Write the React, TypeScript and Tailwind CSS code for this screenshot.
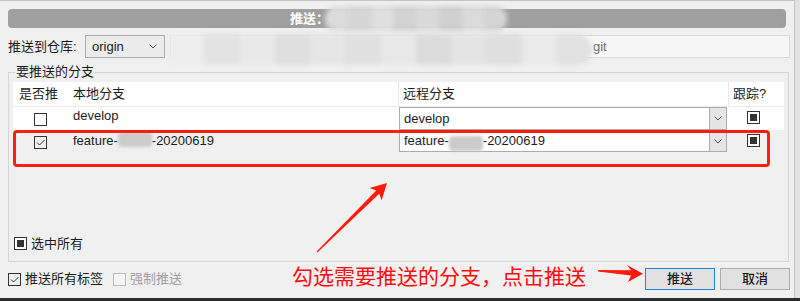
import React from 'react';

type BoxKind = 'empty' | 'check' | 'fill' | 'off';

// Windows-style checkbox
const Box: React.FC<{ kind: BoxKind }> = ({ kind }) => {
    if (kind === 'fill') {
        return (
            <span className="flex h-[13px] w-[13px] shrink-0 items-center justify-center border border-[#333333] bg-white">
                <span className="h-[7px] w-[7px] bg-[#333333]" />
            </span>
        );
    }
    if (kind === 'off') {
        return <span className="h-[13px] w-[13px] shrink-0 border border-[#bcbcbc] bg-[#f4f4f4]" />;
    }
    return (
        <span className="flex h-[13px] w-[13px] shrink-0 items-center justify-center border border-[#333333]">
            {kind === 'check' && (
                <svg width="11" height="11" viewBox="0 0 11 11">
                    <path d="M2 5.5 L4.5 8 L9.5 3" fill="none" stroke="#333333" strokeWidth="1" />
                </svg>
            )}
        </span>
    );
};

const Chevron = () => (
    <svg width="8" height="5" viewBox="0 0 8 5">
        <path d="M0.5 0.5 L4 4 L7.5 0.5" fill="none" stroke="#555555" strokeWidth="1" />
    </svg>
);

const Combo: React.FC<{ children: React.ReactNode }> = ({ children }) => (
    <div className="flex h-full w-full border border-[#acacac] bg-white">
        <div className="flex flex-1 items-center pl-[4px]">{children}</div>
        <div className="flex w-[17px] items-center justify-center border-l border-[#acacac] bg-[#e5e5e5]">
            <Chevron />
        </div>
    </div>
);

// the mosaic blur that hides a name
const Smudge = () => (
    <span className="inline-block h-[15px] w-[34px] translate-y-[2px] rounded-[4px] bg-[#cbcbcb] blur-[1.5px]" />
);

const titleBlocks = ['bg-[#dcdcdc]', 'bg-[#d6d6d6]', 'bg-[#dfdfdf]', 'bg-[#d3d3d3]', 'bg-[#dadada]', 'bg-[#d0d0d0]', 'bg-[#dbdbdb]', 'bg-[#d5d5d5]'];
const inputBlocks = ['bg-[#ededed]', 'bg-[#e3e3e3]', 'bg-[#e9e9e9]', 'bg-[#dedede]', 'bg-[#e6e6e6]', 'bg-[#e0e0e0]', 'bg-[#e8e8e8]', 'bg-[#dbdbdb]', 'bg-[#e4e4e4]', 'bg-[#dedede]', 'bg-[#eaeaea]', 'bg-[#e1e1e1]'];

const App: React.FC = () => {
    return (
        <div className="relative h-[301px] w-[800px] overflow-hidden bg-[#e2e2e2] font-['Liberation_Sans','Noto_Sans_CJK_SC',sans-serif] text-[13px] text-[#1b1b1b]">
            <div className="flex h-[298px] w-[795px] flex-col border-t border-r border-[#c4c4c4] bg-[#f0f0f0]">
                {/* Title */}
                <div className="mx-2 mt-[8px] flex h-[19px] items-center rounded-[4px] bg-[#a0a0a0] pl-[282px] font-bold text-white">
                    推送：
                </div>

                {/* Remote row */}
                <div className="mt-[7px] flex h-[23px] pl-2 pr-[4px]">
                    <span className="flex w-[77px] items-center">推送到仓库:</span>
                    <div className="flex w-[80px] items-center justify-between border border-[#acacac] bg-[#ececec] pl-[6px] pr-[7px]">
                        <span>origin</span>
                        <Chevron />
                    </div>
                    <div className="relative ml-[5px] flex flex-1 items-center border border-[#d9d9d9] bg-[#f7f7f7] pl-[422px] text-[#6d6d6d]">
                        git
                        <div className="absolute -left-[2px] -top-[2px] flex h-[31px] w-[423px] overflow-hidden rounded-r-[16px] blur-[2.5px]">
                            {inputBlocks.map((c, i) => (
                                <div key={i} className={`flex-1 ${c}`} />
                            ))}
                        </div>
                    </div>
                </div>

                {/* Branch group */}
                <div className="relative ml-2 mr-[5px] mt-[14px] h-[190px] border border-[#d5d5d5]">
                    <span className="absolute -top-[10px] left-[6px] bg-[#f0f0f0] px-[1px] leading-[18px]">要推送的分支</span>
                    <div className="flex h-full flex-col pl-[4px] pr-[4px] pt-[9px]">
                        <div className="flex h-[25px] items-center border-b border-[#ececec] bg-white">
                            <span className="w-[60px] pl-[6px]">是否推</span>
                            <span className="w-[325px]">本地分支</span>
                            <span className="flex h-full w-[330px] items-center border-l border-[#e6e6e6] pl-[4px]">远程分支</span>
                            <span className="flex h-full flex-1 items-center border-l border-[#e6e6e6] pl-[4px]">跟踪?</span>
                        </div>

                        <div className="flex h-[23px] bg-white">
                            <div className="w-[60px] pl-[21px] pt-[6px]">
                                <Box kind="empty" />
                            </div>
                            <div className="w-[325px] leading-[18px]">develop</div>
                            <div className="w-[330px] pl-[1px] pr-[1px]">
                                <Combo>develop</Combo>
                            </div>
                            <div className="flex-1 pl-[19px] pt-[4px]">
                                <Box kind="fill" />
                            </div>
                        </div>

                        <div className="flex h-[30px]">
                            <div className="w-[60px] pl-[21px] pt-[6px]">
                                <Box kind="check" />
                            </div>
                            <div className="w-[325px] leading-[18px]">
                                feature-<Smudge />-20200619
                            </div>
                            <div className="h-[22px] w-[330px] pl-[1px] pr-[1px]">
                                <Combo>
                                    feature-<Smudge />-20200619
                                </Combo>
                            </div>
                            <div className="flex-1 pl-[19px] pt-[4px]">
                                <Box kind="fill" />
                            </div>
                        </div>

                        <div className="flex-1" />

                        <div className="mb-[8px] ml-[1px] flex items-center gap-[4px]">
                            <Box kind="fill" />
                            <span>选中所有</span>
                        </div>
                    </div>
                </div>

                {/* Footer */}
                <div className="mt-[6px] flex h-[22px] items-center pl-2 pr-[4px]">
                    <Box kind="check" />
                    <span className="ml-[4px]">推送所有标签</span>
                    <span className="ml-[10px]" />
                    <Box kind="off" />
                    <span className="ml-[4px] text-[#a0a0a0]">强制推送</span>
                    <button className="ml-auto h-[22px] w-[70px] border border-[#1e84e0] bg-[#e1e1e1] font-medium">推送</button>
                    <button className="ml-[5px] h-[22px] w-[70px] border border-[#adadad] bg-[#e1e1e1] font-medium">取消</button>
                </div>
            </div>
            <div className="h-[3px] w-full bg-[#2b2b2b]" />

            {/* blurred title */}
            <div className="absolute left-[325px] top-[6px] flex h-[25px] w-[182px] overflow-hidden rounded-[12px] blur-[2.5px]">
                {titleBlocks.map((c, i) => (
                    <div key={i} className={`flex-1 ${c}`} />
                ))}
            </div>

            {/* annotations */}
            <div className="absolute left-[13px] top-[130px] h-[37px] w-[757px] rounded-[4px] border-[3px] border-[#ff1f0f]" />
            <span className="absolute left-[292px] top-[262px] font-['Noto_Sans_CJK_SC',sans-serif] text-[21px] leading-[26px] text-[#ff0d0d]">
                勾选需要推送的分支，点击推送
            </span>
            <svg className="pointer-events-none absolute left-0 top-0" width="800" height="301" viewBox="0 0 800 301">
                <polygon
                    points="316.6,251.6 376.2,190.5 369.6,188.1 387,183 381.6,200.3 379.2,193.7 317.4,252.4"
                    fill="#ff1a0a"
                />
                <polygon points="598,270 631,270.2 627,265 643,273.8 628,282 631,275.6 598,271.4" fill="#ff1a0a" />
            </svg>
        </div>
    );
};

export default App;
